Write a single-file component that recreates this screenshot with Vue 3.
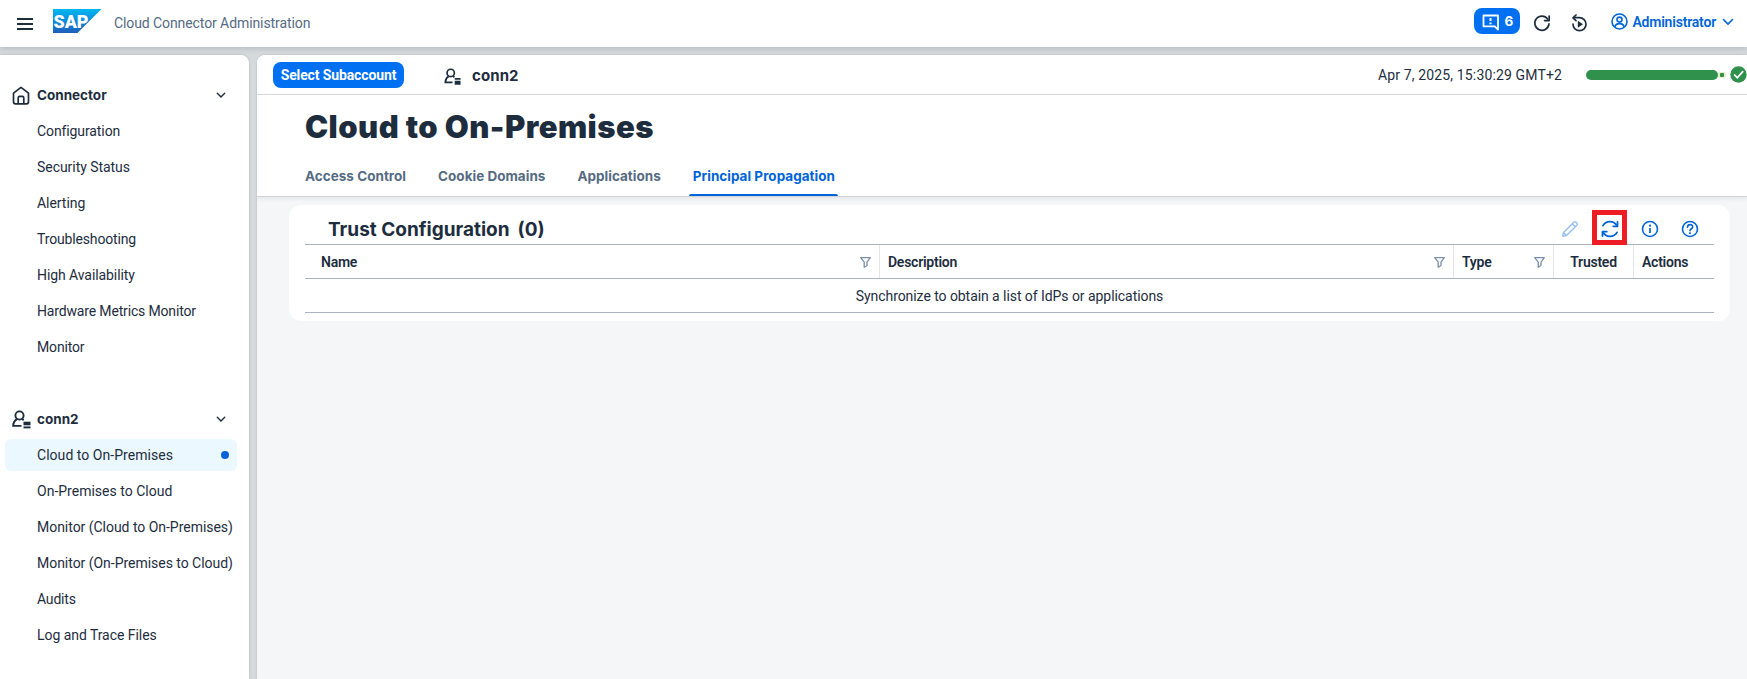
<script setup>
const connector = [
  { label: 'Configuration', track: -0.1 },
  { label: 'Security Status', track: -0.05 },
  { label: 'Alerting', track: -0.05 },
  { label: 'Troubleshooting', track: -0.15 },
  { label: 'High Availability', track: -0.08 },
  { label: 'Hardware Metrics Monitor', track: -0.16 },
  { label: 'Monitor', track: -0.15 }
]
const account = [
  { label: 'Cloud to On-Premises', track: 0.04 },
  { label: 'On-Premises to Cloud', track: 0.01 },
  { label: 'Monitor (Cloud to On-Premises)', track: -0.03 },
  { label: 'Monitor (On-Premises to Cloud)', track: -0.03 },
  { label: 'Audits', track: -0.2 },
  { label: 'Log and Trace Files', track: -0.05 }
]
const tabs = [
  { label: 'Access Control' },
  { label: 'Cookie Domains' },
  { label: 'Applications' },
  { label: 'Principal Propagation', active: true }
]
const columns = [
  { label: 'Name', filter: true },
  { label: 'Description', filter: true },
  { label: 'Type', filter: true },
  { label: 'Trusted', center: true },
  { label: 'Actions' }
]
</script>

<template>
  <div class="app">
    <header class="shell">
      <svg class="burger" width="16" height="14" viewBox="0 0 16 14"><path d="M0 2h16M0 7h16M0 12h16" stroke="#1d2d3e" stroke-width="2" /></svg>
      <svg class="logo" width="49" height="24" viewBox="0 0 49 24">
        <defs><linearGradient id="sap" x1="0" y1="0" x2="0" y2="1"><stop offset="0" stop-color="#00b8f1" /><stop offset=".45" stop-color="#0d8fdc" /><stop offset="1" stop-color="#1e5fbb" /></linearGradient></defs>
        <path d="M0 0H48.5L24.5 24H0Z" fill="url(#sap)" />
        <text class="logo-text" x="0.5" y="19" textLength="35" lengthAdjust="spacingAndGlyphs">SAP</text>
      </svg>
      <span class="product">Cloud Connector Administration</span>
      <div class="shell-right">
        <button class="notice">
          <svg width="18" height="17" viewBox="0 0 18 17" fill="none" stroke="#fff" stroke-width="1.8"><path d="M1.5 1.5h14.5v14l-3.3-3.2H1.5z" stroke-linejoin="round" /><path d="M8.5 4v3M8.5 8.5v1.800" stroke-width="2" /></svg>
          <span>6</span>
        </button>
        <svg class="refresh" width="18" height="18" viewBox="0 0 18 18" fill="none" stroke="#1d2d3e" stroke-width="1.7" stroke-linecap="round"><path d="M16 9.8A7.1 7.1 0 1 1 14.7 5" /><path d="M16.2 2v4.6h-4.6" stroke-linejoin="round" /></svg>
        <svg class="replay" width="18" height="18" viewBox="0 0 18 18" fill="none" stroke="#1d2d3e" stroke-width="1.7" stroke-linecap="round"><path d="M2 10.2a6.5 6.5 0 1 0 6.5-6.5H3" /><path d="M5 1 2 3.8l3 2.8" stroke-linejoin="round" /><path d="M6.800 6.800v7l5.200-3.500z" fill="#1d2d3e" stroke="none" /></svg>
        <div class="user">
          <svg width="17" height="17" viewBox="0 0 17 17" fill="none" stroke="#0064d9" stroke-width="1.6"><circle cx="8.5" cy="8.5" r="7.5" /><circle cx="8.5" cy="6.6" r="2.5" /><path d="M4 13.8c.3-2.4 1.9-3.2 4.5-3.2s4.2.8 4.5 3.2" /></svg>
          <span>Administrator</span>
          <svg width="12" height="8" viewBox="0 0 12 8" fill="none" stroke="#0064d9" stroke-width="1.6" stroke-linecap="round"><path d="M1.5 1.5 6 6l4.5-4.5" /></svg>
        </div>
      </div>
    </header>

    <div class="body">
      <nav class="side">
        <div class="group">
          <svg width="18" height="19" viewBox="0 0 18 19" fill="none" stroke="#1d2d3e" stroke-width="1.7" stroke-linejoin="round"><path d="M1.5 7.2 9 1.400l7.5 5.8v8.6a2 2 0 0 1-2 2h-11a2 2 0 0 1-2-2z" /><path d="M6.2 17.5v-5.6a1.5 1.5 0 0 1 1.500-1.500h2.600a1.500 1.500 0 0 1 1.500 1.500v5.600" /></svg>
          <span>Connector</span>
          <svg class="chev" width="10" height="7" viewBox="0 0 10 7"><path d="M1.300 1.300 5 5l3.700-3.700" /></svg>
        </div>
        <a v-for="i in connector" :key="i.label" class="item"><span :style="{ letterSpacing: i.track + 'px' }">{{ i.label }}</span></a>
        <div class="spacer"></div>
        <div class="group">
          <svg width="19" height="19" viewBox="0 0 19 19" fill="none" stroke="#1d2d3e" stroke-width="1.9"><circle cx="7.500" cy="5.500" r="4.100" /><path d="M9.500 15.900H1.200c0-3.300 1.200-5.200 3.700-6.800M10.200 9.100l1.500 1.200" /><path d="M11.500 13.500h7" stroke-width="3.600" /><path d="M11.500 17.400h7" stroke-width="1.900" /></svg>
          <span>conn2</span>
          <svg class="chev" width="10" height="7" viewBox="0 0 10 7"><path d="M1.300 1.300 5 5l3.700-3.700" /></svg>
        </div>
        <a v-for="(i, n) in account" :key="i.label" class="item" :class="{ selected: n === 0 }"><span :style="{ letterSpacing: i.track + 'px' }">{{ i.label }}</span><i v-if="n === 0" class="dot"></i></a>
      </nav>

      <main class="main">
        <div class="context">
          <button class="select">Select Subaccount</button>
          <svg class="acct" width="17" height="17" viewBox="0 0 19 19" fill="none" stroke="#1d2d3e" stroke-width="1.9"><circle cx="7.500" cy="5.500" r="4.100" /><path d="M9.500 16H1.500c0-3.300 1.200-5.200 3.700-6.800M10.200 9.100l1.500 1.200" /><path d="M12 12.200h6.500" stroke-width="2" /><path d="M12 16.500h6.500" stroke-width="4.400" /></svg>
          <span class="acct-name">conn2</span>
          <span class="date">Apr 7, 2025, 15:30:29 GMT+2</span>
          <div class="bar"></div>
          <div class="bar-end"></div>
          <svg class="ok" width="17" height="17" viewBox="0 0 17 17"><circle cx="8.500" cy="8.500" r="8.200" fill="#30914c" /><path d="M4.600 9 7.300 11.700 12.700 5.600" fill="none" stroke="#fff" stroke-width="1.700" stroke-linecap="round" /></svg>
        </div>
        <div class="heading">
          <h1>Cloud to On-Premises</h1>
          <div class="tabs"><span v-for="t in tabs" :key="t.label" class="tab" :class="{ active: t.active }">{{ t.label }}</span></div>
        </div>
        <section class="card">
          <div class="toolbar">
            <h2><span>Trust Configuration</span><span class="count">(0)</span></h2>
            <div class="tools">
              <div class="tool">
                <svg width="18" height="18" viewBox="0 0 18 18" fill="none" stroke="#99c1f0" stroke-width="1.500" stroke-linejoin="round"><path d="M1.800 16.200l.7-3.700L13 2a1.200 1.200 0 0 1 1.700 0L16 3.300a1.200 1.200 0 0 1 0 1.700L5.500 15.500zM11.200 3.800l3 3M2.500 12.500l3 3" /></svg>
              </div>
              <div class="tool marked">
                <svg width="18" height="18" viewBox="0 0 18 18" fill="none" stroke="#0064d9" stroke-width="1.800" stroke-linecap="round" stroke-linejoin="round"><path d="M2 5.600A8 8 0 0 1 16 5.800M16 12.400A8 8 0 0 1 2 12.200" /><path d="M16.500 2v4.300h-4.300M1.500 16v-4.300h4.300" /></svg>
              </div>
              <div class="tool">
                <svg width="18" height="18" viewBox="0 0 18 18" fill="none" stroke="#0064d9" stroke-width="1.600"><circle cx="9" cy="9" r="7.500" /><path d="M9 8v5" stroke-width="1.700" /><circle cx="9" cy="5.700" r="1.100" fill="#0064d9" stroke="none" /></svg>
              </div>
              <div class="tool">
                <svg width="18" height="18" viewBox="0 0 18 18" fill="none" stroke="#0064d9" stroke-width="1.600"><circle cx="9" cy="9" r="7.500" /><path d="M6.500 7.200c0-3.400 5.200-3.300 5.200-.3C11.700 8.800 9 8.700 9 10.800" stroke-linecap="round" /><circle cx="9" cy="13.200" r="1.050" fill="#0064d9" stroke="none" /></svg>
              </div>
            </div>
          </div>
          <div class="grid">
            <div v-for="c in columns" :key="c.label" class="th" :class="{ center: c.center }">
              <span>{{ c.label }}</span>
              <svg v-if="c.filter" width="11" height="11" viewBox="0 0 11 11" fill="none" stroke="#7890aa" stroke-width="1.300" stroke-linejoin="round"><path d="M.700.700h9.600L7 5.200v3.300L4.200 10.200v-5z" /></svg>
            </div>
          </div>
          <div class="empty"><span>Synchronize to obtain a list of IdPs or applications</span></div>
        </section>
      </main>
    </div>
  </div>
</template>

<style>
body { margin: 0; overflow: hidden; }
</style>

<style scoped>
*, *::after { box-sizing: border-box; }
svg { display: block; flex: none; }
button { border: 0; font: inherit; }
.app { width: 1747px; height: 679px; overflow: hidden; display: flex; flex-direction: column; background: #d5dadd; color: #1d2d3e; font: 14px/20px Roboto, "Noto Sans", sans-serif; white-space: nowrap; }
.shell { position: relative; height: 47px; flex: none; background: #fff; display: flex; align-items: center; padding-left: 17px; box-shadow: 0 1px 6px rgba(34, 53, 72, .22); }
.burger { margin-right: 20px; }
.logo { margin: -5px 12px 0 0; }
.logo-text { font: 900 19px Roboto, sans-serif; fill: #fff; }
.product { color: #556b82; letter-spacing: -.09px; margin-top: -1px; }
.shell-right { margin-left: auto; display: flex; align-items: center; padding-right: 13px; }
.notice { width: 46px; height: 26px; border-radius: 8px; background: #0070f2; color: #fff; display: flex; align-items: center; padding: 0 0 0 8px; gap: 4px; font: 700 13.5px/20px Inter, sans-serif; margin: -5px 13px 0 0; }
.notice svg { margin-top: 2px; }
.refresh { margin: -1px 20px 0 0; }
.replay { margin: -1px 22px 0 0; }
.user { display: flex; align-items: center; gap: 6px; color: #0064d9; font-weight: 600; letter-spacing: -.2px; margin-top: -4px; }
.user svg:first-child { margin-right: -2px; }
.body { flex: 1; min-height: 0; display: flex; gap: 8px; padding-top: 8px; }
.side { width: 249px; flex: none; background: #fff; border-top-right-radius: 8px; padding: 22px 12px 0 5px; box-shadow: 0 0 3px rgba(34, 53, 72, .2); }
.group { height: 36px; display: flex; align-items: center; padding: 0 11px 0 7px; font: 700 13.5px/20px Inter, sans-serif; }
.group span { margin-left: 6px; width: 179px; }
.group svg { margin-right: 1px; }
.group svg.chev { margin: 0 0 0 auto; }
.group:not(:first-child) svg:first-child { margin-right: 0; }
.chev path { fill: none; stroke: #1d2d3e; stroke-width: 1.4; stroke-linecap: round; }
.spacer { height: 34px; }
.item { height: 32px; margin: 2px 0 4px; display: flex; align-items: center; justify-content: space-between; padding: 0 8px 0 32px; border-radius: 6px; }
.item.selected { background: #ebf8ff; }
.dot { width: 8px; height: 8px; border-radius: 50%; background: #0064d9; }
.main { flex: 1; min-width: 0; background: #f5f6f7; border-top-left-radius: 8px; box-shadow: 0 0 2px rgba(34, 53, 72, .25); overflow: hidden; }
.context { height: 40px; background: #fff; border-bottom: 1px solid #d9d9d9; display: flex; align-items: center; padding: 0 0 0 16px; }
.select { width: 131px; height: 26px; border-radius: 8px; background: #0070f2; color: #fff; font-weight: 700; letter-spacing: -.12px; padding: 0; text-align: center; margin-top: 1px; }
.acct { margin: 3px 11px 0 40px; }
.acct-name { font: 700 15px/20px Inter, sans-serif; letter-spacing: .1px; margin-top: 2px; }
.date { margin-left: auto; letter-spacing: .14px; }
.bar { width: 132px; height: 10px; border-radius: 5px; background: #30914c; margin-left: 24px; }
.bar-end { width: 8px; height: 6px; border-radius: 2px; background: radial-gradient(circle, #30914c 2px, #e4f0c4 2.5px); }
.ok { margin-left: 4px; }
.heading { position: relative; height: 102px; background: #fff; border-bottom: 1px solid #d0d4d8; padding: 12px 0 0 48px; box-shadow: 0 2px 4px rgba(34, 53, 72, .08); }
h1 { margin: 0; font: 900 31px/39px Inter, sans-serif; letter-spacing: .45px; height: 40px; }
.tabs { display: flex; height: 49px; gap: 32px; }
.tab { position: relative; height: 49px; font: 700 13.5px/58px Inter, sans-serif; letter-spacing: .02px; color: #556b82; }
.tab.active { color: #0064d9; }
.tab.active::after { content: ""; position: absolute; left: -4px; right: -3px; bottom: 0; height: 2px; background: #0064d9; border-radius: 2px 2px 0 0; }
.card { margin: 8px 17px 0 32px; height: 116px; border-radius: 12px; background: #fff; padding: 0 16px; }
.toolbar { height: 39px; display: flex; justify-content: space-between; padding: 5px 6px 0 23px; }
h2 { margin: 0; display: flex; gap: 8px; font: 700 19px/39px Inter, sans-serif; }
.tools { display: flex; gap: 4px; }
.tool { width: 36px; height: 36px; display: flex; align-items: center; justify-content: center; }
.tool svg { margin-top: 2px; }
.tool.marked { position: relative; }
.tool.marked::after { content: ""; position: absolute; left: 0; top: 0; width: 35px; height: 35px; border: 5px solid #ee1c25; }
.grid { display: grid; grid-template-columns: 575px 574px 100px 80px 1fr; height: 35px; border-top: 1px solid #a8b3bf; border-bottom: 1px solid #a8b3bf; }
.th { display: flex; align-items: center; justify-content: space-between; padding: 1px 8px 0; border-right: 1px solid #e5e5e5; font-weight: 600; letter-spacing: -.25px; }
.th:first-child { padding-left: 16px; }
.th:last-child { border-right: 0; }
.th.center { justify-content: center; }
.empty { height: 34px; border-bottom: 1px solid #a8b3bf; display: flex; align-items: center; justify-content: center; letter-spacing: -.06px; }
</style>
